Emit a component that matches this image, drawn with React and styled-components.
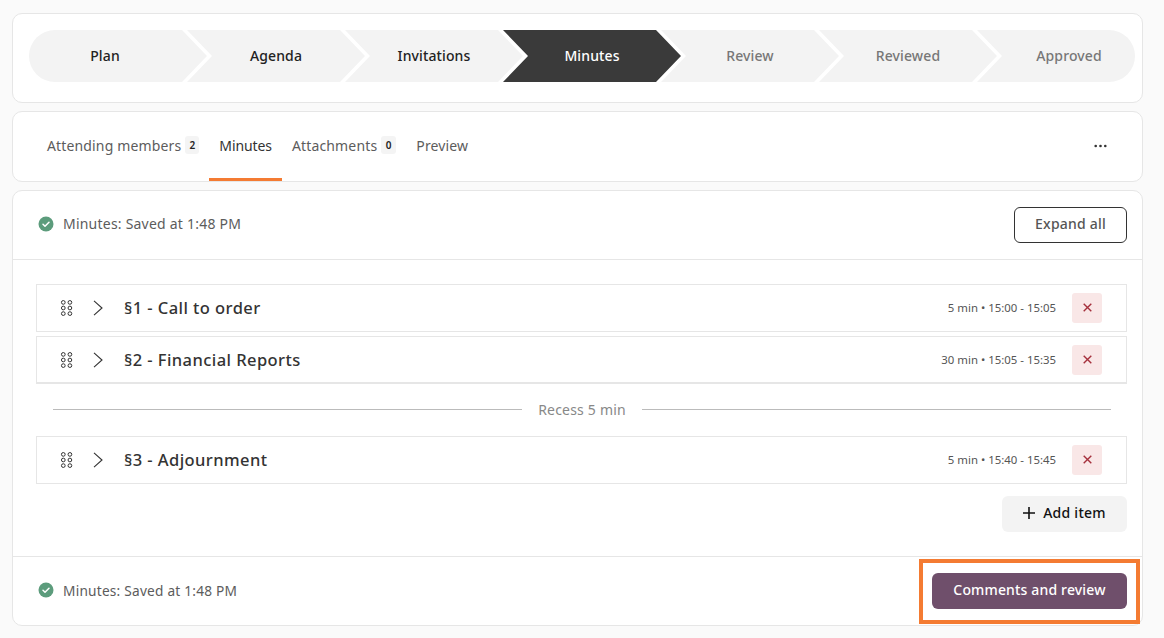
import React from 'react'
import styled, { createGlobalStyle } from 'styled-components'

const GlobalStyle = createGlobalStyle`
  html, body { margin: 0; padding: 0; background: #fafafa; }
  body { font-family: "Noto Sans", "Open Sans", sans-serif; color: #333; }
  * { box-sizing: border-box; }
`

const steps = [
  { label: 'Plan', state: 'done', edge: 'first' },
  { label: 'Agenda', state: 'done' },
  { label: 'Invitations', state: 'done' },
  { label: 'Minutes', state: 'active' },
  { label: 'Review', state: 'todo' },
  { label: 'Reviewed', state: 'todo' },
  { label: 'Approved', state: 'todo', edge: 'last' },
]

const Check = () => (
  <CheckIcon width="16" height="16" viewBox="0 0 16 16">
    <circle cx="8" cy="8" r="7.5" fill="#5c9c7c" />
    <path d="M5 8.2l2 2 4-4" fill="none" stroke="#fff" strokeWidth="1.5" strokeLinecap="round" strokeLinejoin="round" />
  </CheckIcon>
)

const Grip = () => (
  <svg width="14" height="16" viewBox="0 0 14 16" fill="none" stroke="#333" strokeWidth="1">
    {[2.4, 8, 13.6].map((y) => (
      <React.Fragment key={y}>
        <circle cx="3.3" cy={y} r="1.85" />
        <circle cx="9.9" cy={y} r="1.85" />
      </React.Fragment>
    ))}
  </svg>
)

const Chevron = () => (
  <svg width="10" height="16" viewBox="0 0 10 16" fill="none" stroke="#333" strokeWidth="1.1">
    <path d="M1 .8L9 8l-8 7.2" />
  </svg>
)

const Cross = () => (
  <svg width="9" height="9" viewBox="0 0 9 9" fill="none" stroke="#a5303c" strokeWidth="1.4">
    <path d="M.7.7l7.6 7.6M8.3.7L.7 8.3" />
  </svg>
)

const Plus = () => (
  <svg width="12" height="12" viewBox="0 0 12 12" fill="none" stroke="#111" strokeWidth="1.6">
    <path d="M6 0v12M0 6h12" />
  </svg>
)

const Dots = () => (
  <svg width="13" height="4" viewBox="0 0 13 4" fill="#333">
    <circle cx="1.7" cy="2" r="1.3" />
    <circle cx="6.5" cy="2" r="1.3" />
    <circle cx="11.3" cy="2" r="1.3" />
  </svg>
)

const AgendaItem = ({ title, time, thick }) => (
  <Item $thick={thick}>
    <Grip />
    <Toggle><Chevron /></Toggle>
    <ItemTitle>{title}</ItemTitle>
    <ItemTime>{time}</ItemTime>
    <RemoveButton><Cross /></RemoveButton>
  </Item>
)

const App = () => {
  return (
    <Page>
      <GlobalStyle />
      <Card>
        <Stepper>
          {steps.map((s) => (
            <Step key={s.label} $state={s.state} $edge={s.edge}>{s.label}</Step>
          ))}
        </Stepper>
      </Card>

      <TabsCard>
        <Tabs>
          <Tab>Attending members <Count>2</Count></Tab>
          <Tab $active>Minutes</Tab>
          <Tab>Attachments <Count $wide>0</Count></Tab>
          <Tab>Preview</Tab>
        </Tabs>
        <MoreButton><Dots /></MoreButton>
      </TabsCard>

      <Card>
        <PanelHeader>
          <Status><Check /> <StatusText $raised>Minutes: Saved at 1:48 PM</StatusText></Status>
          <OutlineButton>Expand all</OutlineButton>
        </PanelHeader>

        <PanelBody>
          <ItemList>
            <AgendaItem title="§1 - Call to order" time="5 min • 15:00 - 15:05" />
            <AgendaItem title="§2 - Financial Reports" time="30 min • 15:05 - 15:35" thick />
          </ItemList>
          <Recess>Recess 5 min</Recess>
          <AgendaItem title="§3 - Adjournment" time="5 min • 15:40 - 15:45" />
          <AddRow>
            <AddButton><Plus /> Add item</AddButton>
          </AddRow>
        </PanelBody>

        <PanelFooter>
          <Status $small><Check /> <StatusText>Minutes: Saved at 1:48 PM</StatusText></Status>
          <Highlight>
            <PrimaryButton>Comments and review</PrimaryButton>
          </Highlight>
        </PanelFooter>
      </Card>
    </Page>
  )
}

export default App

const Page = styled.div`
  display: flex;
  flex-direction: column;
  gap: 8px;
  padding: 13px 21px 0 12px;
`

const Card = styled.section`
  background: #fff;
  border: 1px solid #e6e6e6;
  border-radius: 10px;
`

const Stepper = styled.div`
  display: flex;
  margin: 16px 7px 20px 16px;
  height: 52px;
`

const stepColors = {
  done: 'background: #f3f3f3; color: #222;',
  active: 'background: #3a3a3a; color: #fff;',
  todo: 'background: #f3f3f3; color: #777;',
}

const Step = styled.div`
  ${(p) => stepColors[p.$state]}
  flex: none;
  width: ${(p) => (p.$edge === 'last' ? '158px' : '178px')};
  margin-left: ${(p) => (p.$edge === 'first' ? '0' : '-20px')};
  display: flex;
  align-items: center;
  justify-content: center;
  font-size: 14px;
  font-weight: 500;
  letter-spacing: 0.12px;
  padding: ${(p) => (p.$edge === 'first' ? '0 26px 2px 0' : p.$edge === 'last' ? '0 0 2px 26px' : '0 0 2px')};
  border-radius: ${(p) => (p.$edge === 'first' ? '26px 0 0 26px' : p.$edge === 'last' ? '0 26px 26px 0' : '0')};
  clip-path: ${(p) =>
    p.$edge === 'first'
      ? 'polygon(0 0, calc(100% - 25px) 0, 100% 50%, calc(100% - 25px) 100%, 0 100%)'
      : p.$edge === 'last'
        ? 'polygon(0 0, 100% 0, 100% 100%, 0 100%, 25px 50%)'
        : 'polygon(0 0, calc(100% - 25px) 0, 100% 50%, calc(100% - 25px) 100%, 0 100%, 25px 50%)'};
`

const TabsCard = styled(Card)`
  display: flex;
  align-items: center;
  justify-content: space-between;
  height: 71px;
  padding: 0 35px 0 24px;
`

const Tabs = styled.nav`
  display: flex;
  height: 100%;
`

const Tab = styled.div`
  display: flex;
  align-items: center;
  gap: 4px;
  padding: 0 10px;
  font-size: 14px;
  letter-spacing: ${(p) => (p.$active ? '-0.1px' : '0.15px')};
  color: ${(p) => (p.$active ? '#333' : '#5c5c5c')};
  border-bottom: 3px solid ${(p) => (p.$active ? '#f47b32' : 'transparent')};
`

const Count = styled.span`
  display: inline-flex;
  align-items: center;
  justify-content: center;
  width: ${(p) => (p.$wide ? '15px' : '14px')};
  height: 18px;
  border-radius: 3px;
  background: #f4f4f4;
  color: #222;
  font-size: 10px;
  font-weight: 600;
`

const MoreButton = styled.div`
  display: flex;
  align-items: center;
  padding-bottom: 2px;
`

const PanelHeader = styled.div`
  display: flex;
  align-items: center;
  justify-content: space-between;
  height: 69px;
  padding: 0 15px 0 25px;
  border-bottom: 1px solid #e6e6e6;
`

const Status = styled.div`
  display: flex;
  align-items: center;
  gap: 9px;
  font-size: ${(p) => (p.$small ? '13.7px' : '14px')};
  letter-spacing: 0.22px;
  color: #5c5c5c;
`

const CheckIcon = styled.svg`
  margin-bottom: 2px;
`

const StatusText = styled.span`
  padding-bottom: ${(p) => (p.$raised ? '3px' : '2px')};
`

const OutlineButton = styled.button`
  width: 113px;
  height: 36px;
  padding: 0 0 3px;
  border: 1px solid #333;
  border-radius: 6px;
  background: #fff;
  color: #555;
  font: 500 14px "Noto Sans", sans-serif;
  letter-spacing: 0.2px;
`

const PanelBody = styled.div`
  padding: 24px 15px 24px 23px;
`

const ItemList = styled.div`
  display: flex;
  flex-direction: column;
  gap: 4px;
`

const Item = styled.div`
  display: flex;
  align-items: center;
  height: 48px;
  padding: 0 24px 0 23px;
  border: 1px solid #e6e6e6;
  box-shadow: ${(p) => (p.$thick ? 'inset 0 -1px #e6e6e6' : 'none')};
  background: #fff;
`

const Toggle = styled.span`
  display: flex;
  margin-left: 19px;
`

const ItemTitle = styled.div`
  margin-left: 21px;
  padding-bottom: 2px;
  font-size: 16.5px;
  font-weight: 500;
  letter-spacing: 0.43px;
  color: #333;
`

const ItemTime = styled.div`
  margin-left: auto;
  padding-bottom: 2px;
  font-size: 11.4px;
  color: #555;
`

const RemoveButton = styled.div`
  display: flex;
  align-items: center;
  justify-content: center;
  width: 30px;
  height: 30px;
  margin-left: 16px;
  padding-bottom: 2px;
  border-radius: 3px;
  background: #f9e7e7;
`

const Recess = styled.div`
  display: flex;
  align-items: center;
  gap: 16px;
  height: 52px;
  padding: 0 16px 2px 17px;
  font-size: 14px;
  letter-spacing: 0.2px;
  color: #888;
  &::before, &::after {
    content: "";
    flex: 1;
    height: 1px;
    background: #bbb;
  }
`

const AddRow = styled.div`
  display: flex;
  justify-content: flex-end;
  margin-top: 12px;
`

const AddButton = styled.button`
  display: flex;
  align-items: center;
  justify-content: center;
  gap: 8px;
  width: 125px;
  height: 36px;
  padding: 0 0 3px;
  border: 0;
  border-radius: 6px;
  background: #f3f3f3;
  color: #111;
  font: 500 14px "Noto Sans", sans-serif;
  letter-spacing: 0.25px;
`

const PanelFooter = styled.div`
  display: flex;
  align-items: center;
  justify-content: space-between;
  height: 69px;
  padding: 0 15px 0 25px;
  border-top: 1px solid #e6e6e6;
`

const Highlight = styled.div`
  position: relative;
  &::after {
    content: "";
    position: absolute;
    inset: -14px -13px -15px;
    border: 4px solid #f47b32;
    pointer-events: none;
  }
`

const PrimaryButton = styled.button`
  display: block;
  width: 195px;
  height: 36px;
  padding: 0 0 3px;
  border: 0;
  border-radius: 6px;
  background: #6f4f6b;
  color: #fff;
  font: 500 14px "Noto Sans", sans-serif;
  letter-spacing: 0.16px;
`
